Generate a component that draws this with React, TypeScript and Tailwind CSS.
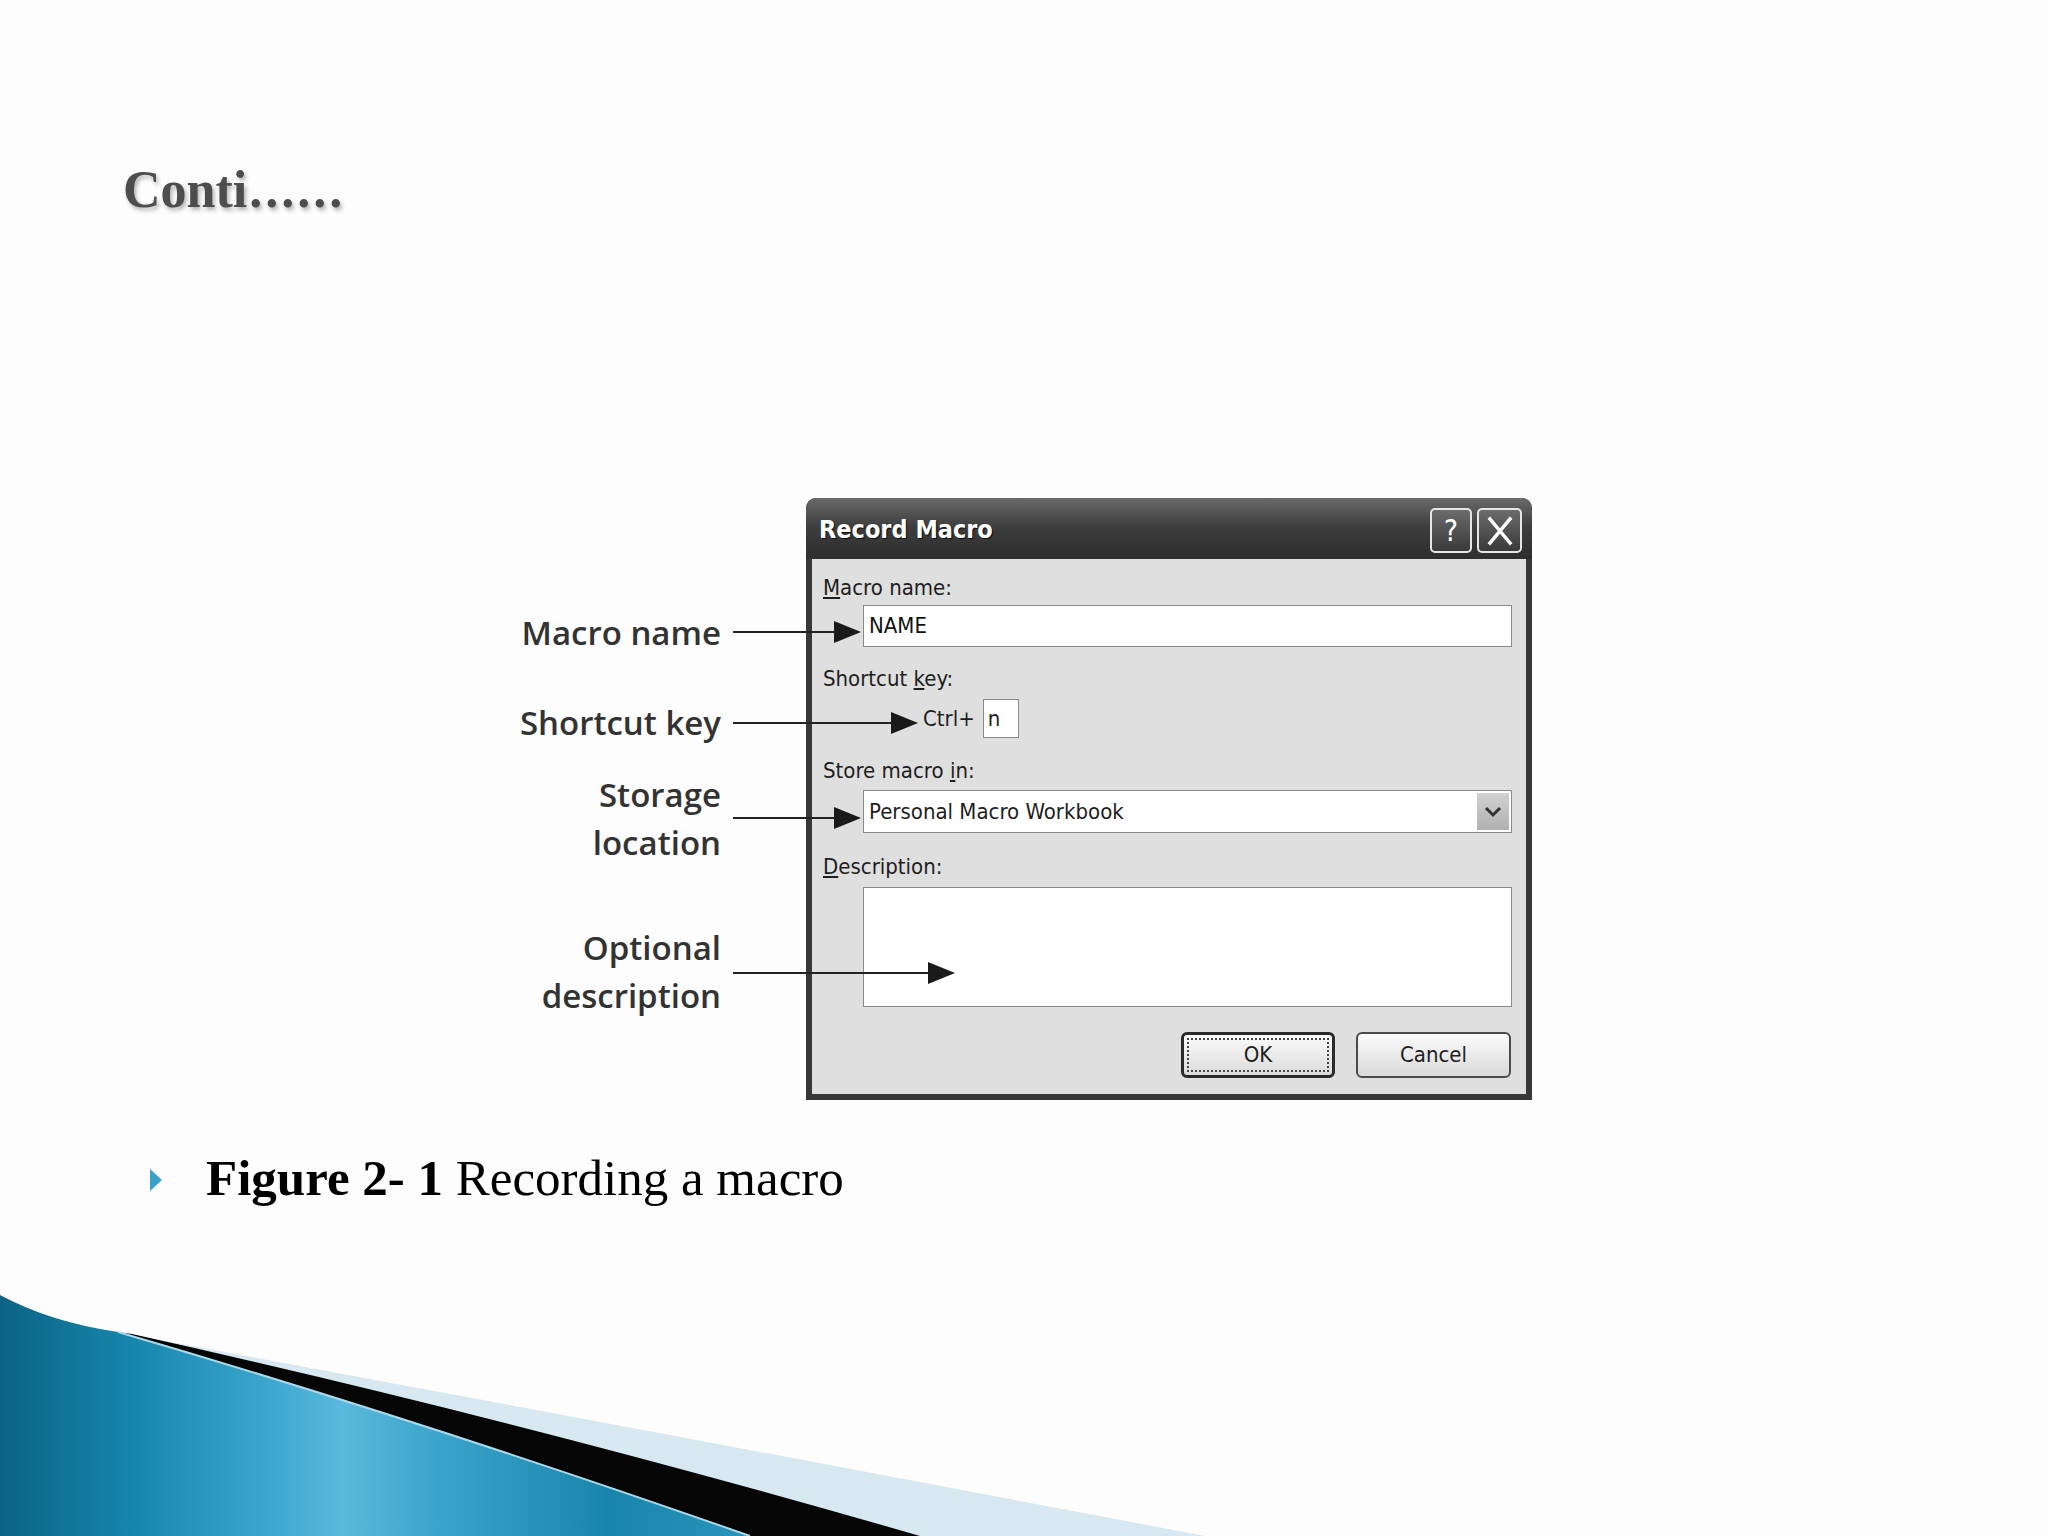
import React from "react";

const dlgFont = "font-['DejaVu_Sans_Condensed','DejaVu_Sans',sans-serif] [font-stretch:condensed]";

function Swoosh() {
  return (
    <svg
      className="absolute left-0 top-0 pointer-events-none"
      width={2048}
      height={1536}
      viewBox="0 0 2048 1536"
    >
      <defs>
        <linearGradient id="teal" x1="0" y1="0" x2="760" y2="0" gradientUnits="userSpaceOnUse">
          <stop offset="0" stopColor="#0b6486" />
          <stop offset="0.18" stopColor="#1786ad" />
          <stop offset="0.36" stopColor="#3ea8cf" />
          <stop offset="0.45" stopColor="#5ab9dc" />
          <stop offset="0.58" stopColor="#3aa3c9" />
          <stop offset="0.8" stopColor="#1a85ab" />
          <stop offset="1" stopColor="#2b95bb" />
        </linearGradient>
      </defs>
      <path d="M118 1332 L160 1340 Q 700 1440 1205 1536 L 915 1536 Z" fill="#d7e8f1" />
      <path d="M118 1332 L132 1334 Q 520 1420 920 1536 L 750 1536 Q 420 1420 118 1332 Z" fill="#050505" />
      <path d="M0 1295 Q 50 1322 118 1332 Q 420 1420 750 1536 L 0 1536 Z" fill="url(#teal)" />
      <path d="M118 1332 Q 420 1420 750 1536" fill="none" stroke="#a9d9ea" strokeWidth="2" />
    </svg>
  );
}

function Arrow({ y, x2 }: { y: number; x2: number }) {
  return (
    <g>
      <line x1={233} y1={y} x2={x2 - 24} y2={y} stroke="#222" strokeWidth={2.2} />
      <polygon points={`${x2 - 27},${y - 11} ${x2},${y} ${x2 - 27},${y + 11}`} fill="#1a1a1a" />
    </g>
  );
}

function Dialog() {
  return (
    <div className={`w-[726px] h-[602px] flex flex-col rounded-t-[10px] bg-[#383838] ${dlgFont}`}>
      <div className="h-[61px] shrink-0 flex items-center justify-between pl-[13px] pr-[10px] rounded-t-[10px] bg-gradient-to-b from-[#6a6a6a] via-[#3c3c3c] to-[#2e2e2e]">
        <span className="text-white font-bold text-[25px] leading-none [text-shadow:1px_1px_1px_rgba(0,0,0,0.8)] mt-[2px]">
          Record Macro
        </span>
        <div className="flex gap-[5px] mt-[4px]">
          <div className="w-[42px] h-[45px] rounded-[5px] border-2 border-[#e6e6e6] bg-gradient-to-b from-[#6c6c6c] to-[#3a3a3a] flex items-center justify-center text-white text-[30px] leading-none font-['DejaVu_Sans',sans-serif]">
            ?
          </div>
          <div className="w-[45px] h-[45px] rounded-[5px] border-2 border-[#e6e6e6] bg-gradient-to-b from-[#6c6c6c] to-[#3a3a3a] flex items-center justify-center">
            <svg width="28" height="30" viewBox="0 0 28 30">
              <path d="M4 3 L24 27 M24 3 L4 27" stroke="#fff" strokeWidth="3.5" strokeLinecap="square" />
            </svg>
          </div>
        </div>
      </div>
      <div className="flex-1 mx-[6px] mb-[6px] bg-[#dfdfdf] pl-[11px] pr-[14px] pt-[16px] text-[22px] text-[#1e1e1e] leading-[26px]">
        <div>
          <span className="underline underline-offset-2">M</span>acro name:
        </div>
        <div className="mt-[4px] ml-[40px] h-[42px] bg-white border border-[#8a8a8a] flex items-center pl-[5px] text-[#111]">
          NAME
        </div>
        <div className="mt-[19px]">
          Shortcut <span className="underline underline-offset-2">k</span>ey:
        </div>
        <div className="mt-[7px] pl-[100px] flex items-center gap-[8px]">
          <span>Ctrl+</span>
          <div className="w-[36px] h-[39px] bg-white border border-[#8a8a8a] flex items-center pl-[4px]">n</div>
        </div>
        <div className="mt-[20px]">
          Store macro <span className="underline underline-offset-2">i</span>n:
        </div>
        <div className="mt-[6px] ml-[40px] h-[43px] bg-white border border-[#8a8a8a] flex items-center justify-between pl-[5px] pr-[2px]">
          <span>Personal Macro Workbook</span>
          <div className="w-[32px] h-[37px] bg-gradient-to-b from-[#d2d2d2] to-[#b0b0b0] flex items-center justify-center">
            <svg width="20" height="14" viewBox="0 0 20 14">
              <path d="M3 3 L10 10 L17 3" fill="none" stroke="#333" strokeWidth="3" />
            </svg>
          </div>
        </div>
        <div className="mt-[21px]">
          <span className="underline underline-offset-2">D</span>escription:
        </div>
        <div className="mt-[7px] ml-[40px] h-[120px] bg-white border border-[#8a8a8a]" />
        <div className="mt-[25px] flex justify-end gap-[21px] pr-[1px]">
          <div className="w-[154px] h-[46px] rounded-[6px] border-[3px] border-[#2a2a2a] bg-gradient-to-b from-[#fafafa] to-[#dcdcdc] p-[3px]">
            <div className="w-full h-full border-2 border-dotted border-[#444] flex items-center justify-center">OK</div>
          </div>
          <div className="w-[155px] h-[46px] rounded-[6px] border-2 border-[#4a4a4a] bg-gradient-to-b from-[#fbfbfb] to-[#dadada] flex items-center justify-center">
            Cancel
          </div>
        </div>
      </div>
    </div>
  );
}

export default function App() {
  return (
    <div className="relative w-[2048px] h-[1536px] overflow-hidden bg-[#fdfdfd]">
      <Swoosh />
      <div className="relative flex flex-col">
        <div className="mt-[163px] pl-[123px] font-['Liberation_Serif',serif] font-bold text-[52px] leading-[54px] text-[#4d4d4d] [text-shadow:2px_3px_4px_rgba(0,0,0,0.3)]">
          Conti<span className="tracking-[3px] ml-[2px]">......</span>
        </div>

        <div className="relative mt-[281px] ml-[500px] flex gap-[85px]">
          <div className="w-[221px] text-right font-['Open_Sans',sans-serif] font-semibold text-[33px] leading-[48px] text-[#333]">
            <div className="mt-[111px]">Macro name</div>
            <div className="mt-[42px]">Shortcut key</div>
            <div className="mt-[24px]">
              <div>Storage</div>
              <div>location</div>
            </div>
            <div className="mt-[57px]">
              <div>Optional</div>
              <div>description</div>
            </div>
          </div>
          <Dialog />
          <svg className="absolute left-0 top-0 pointer-events-none" width={1100} height={602}>
            <Arrow y={134} x2={361} />
            <Arrow y={225} x2={418} />
            <Arrow y={320} x2={361} />
            <Arrow y={475} x2={455} />
          </svg>
        </div>

        <div className="mt-[48px] pl-[150px] flex items-center h-[60px]">
          <svg width="12" height="22" viewBox="0 0 12 22" className="mt-[4px]">
            <polygon points="0,0 12,11 0,22" fill="#3aa2c7" />
          </svg>
          <div className="ml-[44px] font-['Liberation_Serif',serif] text-[51px] leading-[60px] text-black">
            <span className="font-bold">Figure 2- 1</span> Recording a macro
          </div>
        </div>
      </div>
    </div>
  );
}
